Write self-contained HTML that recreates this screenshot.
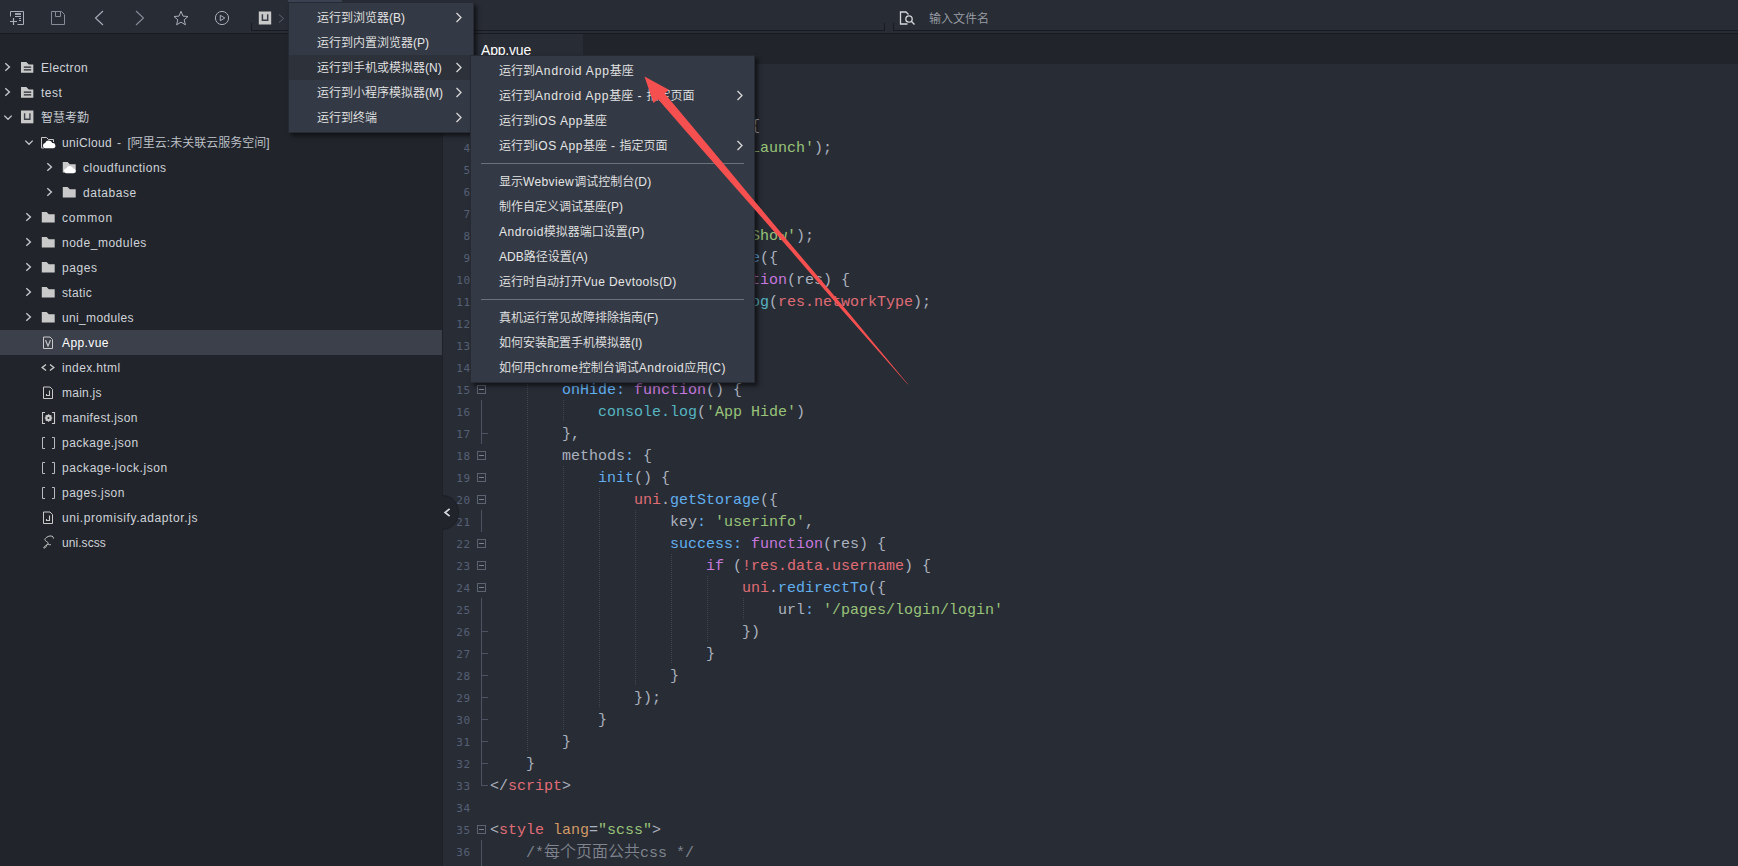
<!DOCTYPE html><html lang="zh-CN"><head><meta charset="utf-8"><title>HBuilder X</title><style>
*{box-sizing:border-box;margin:0;padding:0}
html,body{width:1738px;height:866px;overflow:hidden;background:#282c35;}
body{position:relative;font-family:"Liberation Sans", "Noto Sans CJK SC", sans-serif;font-size:12px;color:#d0d3d9;font-weight:350;}
#toolbar{position:absolute;left:0;top:0;width:1738px;height:33px;background:#282c35;}
#tbline{position:absolute;left:0;top:33px;width:1738px;height:1px;background:#181a1f;}
#topstrip{position:absolute;left:288px;top:0;width:54px;height:2px;background:#3e4353;}
.ibox{position:absolute;height:8px;border:1px solid #181a1f;border-top:none;}
#sidebar{position:absolute;left:0;top:34px;width:442px;height:832px;background:#21252b;}
#split{position:absolute;left:442px;top:34px;width:1px;height:832px;background:#1e2127;}
.row{position:absolute;left:0;width:442px;height:25px;line-height:25px;white-space:nowrap;color:#d0d3d9;}
.row.sel{background:#3c404b;color:#fff;}
.row svg{position:absolute;top:0;}
.row .t{position:absolute;top:1px;}
.dim{color:#c0c4cc;}
#tabbar{position:absolute;left:443px;top:34px;width:1295px;height:30px;background:#21252b;}
#tab{position:absolute;left:473px;top:34px;width:110px;height:30px;background:#282c35;color:#fff;font-size:14px;letter-spacing:-0.2px;}
#tab span{position:absolute;left:8px;top:8px;line-height:16px;}
#editor{position:absolute;left:444px;top:72px;width:1294px;height:795px;overflow:hidden;}
.ln{position:absolute;left:0;width:1294px;height:22px;line-height:22px;white-space:pre;font-family:"Liberation Mono", "Noto Sans CJK SC", monospace;font-size:15px;color:#abb2bf;}
.ln .no{position:absolute;left:0;top:0;width:26.6px;letter-spacing:0.5px;text-align:right;font-family:"DejaVu Sans Mono","Liberation Mono",monospace;font-size:11px;color:#566075;line-height:22px;}
.ln .c{position:absolute;left:46px;top:0;}
.fb{position:absolute;left:33px;top:5px;width:9px;height:9px;border:1px solid #5c6370;}
.fb:after{content:"";position:absolute;left:1px;top:3px;width:5px;height:1px;background:#7a8190;}
.fv{position:absolute;left:37px;top:-2px;width:1px;height:22px;background:#4b5263;}
.ft{position:absolute;left:37px;top:9px;width:7px;height:1px;background:#4b5263;}
.fe{position:absolute;left:37px;top:-2px;width:1px;height:12px;background:#4b5263;}
.ig{position:absolute;top:-2px;width:1px;height:22px;background-image:linear-gradient(#3e4451 50%, transparent 50%);background-size:1px 2px;}
.k{color:#c678dd}.b{color:#61afef}.g{color:#98c379}.r{color:#e06c75}.cy{color:#56b6c2}.o{color:#d19a66}.cm{color:#7f848e}
.menu{position:absolute;background:#343a45;border:1px solid #262a33;box-shadow:3px 3px 4px rgba(0,0,0,.55);color:#e6e6e6;font-size:12px;}
.mi{position:absolute;left:0;height:25px;line-height:25px;white-space:nowrap;}
.mi.hl{background:#2c313a;}
.mi>span{position:absolute;top:1px;}
.mi svg{position:absolute;top:7px;}
.sep{position:absolute;height:1px;background:#6b707a;}
#handle{position:absolute;left:425px;top:495px;width:34px;height:35px;border-radius:50%;background:#21252b;border:1px solid #1c1f25;clip-path:inset(0 0 0 17px);}
</style></head><body>
<div id="toolbar">
<svg style="position:absolute;left:9px;top:10px" width="16" height="16" viewBox="0 0 16 16" fill="none" stroke="#aaafba" stroke-width="1"><path d="M1.5 6.5V1.5H14.5V14.5H8.5"/><rect x="6" y="3.1" width="6" height="1.8" fill="#aaafba" stroke="none"/><path d="M6 6.5H12M10 8.5H12M10 10.5H12"/><path d="M1 11.5H8M4.5 8V15" stroke-width="1.2"/></svg>
<svg style="position:absolute;left:50px;top:10px" width="16" height="16" viewBox="0 0 16 16" fill="none" stroke="#878c98" stroke-width="1"><path d="M1.5 1.5H11.5L14.5 4.5V14.5H1.5Z"/><path d="M5.5 1.5V6.5H10.5V1.5"/></svg>
<svg style="position:absolute;left:93px;top:10px" width="12" height="16" viewBox="0 0 12 16" fill="none" stroke="#aaafba" stroke-width="1.1"><path d="M10 1L2.5 8L10 15"/></svg>
<svg style="position:absolute;left:134px;top:10px" width="12" height="16" viewBox="0 0 12 16" fill="none" stroke="#878c98" stroke-width="1.1"><path d="M2 1L9.5 8L2 15"/></svg>
<svg style="position:absolute;left:173px;top:10px" width="16" height="16" viewBox="0 0 16 16" fill="none" stroke="#aaafba" stroke-width="1" stroke-linejoin="miter"><path d="M8 1.3L10 6.1L15 6.5L11.2 9.8L12.4 14.8L8 12.1L3.6 14.8L4.8 9.8L1 6.5L6 6.1Z"/></svg>
<svg style="position:absolute;left:214px;top:10px" width="16" height="16" viewBox="0 0 16 16" fill="none" stroke="#aaafba" stroke-width="1"><circle cx="8" cy="8" r="6.6"/><path d="M6.3 5.3L10.8 8L6.3 10.7Z"/></svg>
<svg style="position:absolute;left:258px;top:11px" width="14" height="14" viewBox="0 0 14 14"><rect x="0.8" y="0.5" width="12.4" height="13" fill="#c9c9c9"/><path d="M4.4 3.3V9.3H9.7V3.3" fill="none" stroke="#3a3e47" stroke-width="1.5"/></svg>
<svg style="position:absolute;left:278px;top:14px" width="7" height="10" viewBox="0 0 7 10" fill="none" stroke="#5f6572" stroke-width="1"><path d="M1 0.5L5.5 4.5L1 8.5"/></svg>
<div class="ibox" style="left:251px;top:23px;width:634px"></div>
<div class="ibox" style="left:893px;top:23px;width:860px"></div>
<svg style="position:absolute;left:899px;top:11px" width="17" height="15" viewBox="0 0 17 15" fill="none" stroke="#d4d6da" stroke-width="1.3"><path d="M8.5 13H1.5V1H7L9.5 3.5"/><circle cx="10" cy="8" r="3.2"/><path d="M12.3 10.3L15.5 13.5"/></svg>
<span style="position:absolute;left:929px;top:11px;line-height:17px;font-size:12px;color:#9da1a8">输入文件名</span>
</div><div id="tbline"></div><div id="topstrip"></div>
<div id="sidebar">
<div class="row" style="top:21px"><svg style="left:4px" width="8" height="25" viewBox="0 0 8 25" fill="none" stroke="#c5c8ce" stroke-width="1.4"><path d="M1.3 8.3L5.4 12L1.3 15.7"/></svg><svg style="left:20px" width="15" height="25" viewBox="0 0 15 25"><path d="M1 7H6.3L8.8 9.5H13.3V17.8H1Z" fill="#c9c9c9"/><path d="M3.8 12.2H11.2M3.8 14.8H11.2" stroke="#21252b" stroke-width="1.3"/></svg><span class="t" style="left:41px"><span id="f1"><span style="letter-spacing:0.37px">Electron</span></span></span></div>
<div class="row" style="top:46px"><svg style="left:4px" width="8" height="25" viewBox="0 0 8 25" fill="none" stroke="#c5c8ce" stroke-width="1.4"><path d="M1.3 8.3L5.4 12L1.3 15.7"/></svg><svg style="left:20px" width="15" height="25" viewBox="0 0 15 25"><path d="M1 7H6.3L8.8 9.5H13.3V17.8H1Z" fill="#c9c9c9"/><path d="M3.8 12.2H11.2M3.8 14.8H11.2" stroke="#21252b" stroke-width="1.3"/></svg><span class="t" style="left:41px"><span id="f2"><span style="letter-spacing:0.51px">test</span></span></span></div>
<div class="row" style="top:71px"><svg style="left:2px" width="12" height="25" viewBox="0 0 12 25" fill="none" stroke="#c5c8ce" stroke-width="1.3"><path d="M2.3 10.6L6 14.3L9.7 10.6"/></svg><svg style="left:20px" width="15" height="25" viewBox="0 0 15 25"><rect x="1" y="5.5" width="12.4" height="12.8" fill="#c9c9c9"/><path d="M4.6 8.2V14.3H9.9V8.2" fill="none" stroke="#3c4049" stroke-width="1.4"/></svg><span class="t" style="left:41px"><span id="f3">智慧考勤</span></span></div>
<div class="row" style="top:96px"><svg style="left:23px" width="12" height="25" viewBox="0 0 12 25" fill="none" stroke="#c5c8ce" stroke-width="1.3"><path d="M2.3 10.6L6 14.3L9.7 10.6"/></svg><svg style="left:41px" width="15" height="25" viewBox="0 0 15 25"><path d="M0.5 18V7.5H5.5L7.5 9.5H12.5V12" fill="none" stroke="#c9c9c9" stroke-width="1"/><path d="M3.8 18.3a2.8 2.8 0 0 1 .3-5.4a3.8 3.8 0 0 1 7.2 .2a2.6 2.6 0 0 1 .9 5.2Z" fill="#fff"/><path d="M0.5 18H3" stroke="#c9c9c9"/></svg><span class="t" style="left:62px"><span id="f4"><span style="letter-spacing:0.33px">uniCloud</span></span><span class="dim"><span id="f5"><span style="letter-spacing:1.61px"> - </span>[阿里云:未关联云服务空间]</span></span></span></div>
<div class="row" style="top:121px"><svg style="left:46px" width="8" height="25" viewBox="0 0 8 25" fill="none" stroke="#c5c8ce" stroke-width="1.4"><path d="M1.3 8.3L5.4 12L1.3 15.7"/></svg><svg style="left:62px" width="15" height="25" viewBox="0 0 15 25"><path d="M0.8 7H5.6L7.8 9.3H13.7V17.6H0.8Z" fill="#c9c9c9"/><path d="M4 18.3a2.6 2.6 0 0 1 .4-5.1a3.6 3.6 0 0 1 6.8 .2a2.5 2.5 0 0 1 .6 4.9Z" fill="#fff"/></svg><span class="t" style="left:83px"><span id="f6"><span style="letter-spacing:0.49px">cloudfunctions</span></span></span></div>
<div class="row" style="top:146px"><svg style="left:46px" width="8" height="25" viewBox="0 0 8 25" fill="none" stroke="#c5c8ce" stroke-width="1.4"><path d="M1.3 8.3L5.4 12L1.3 15.7"/></svg><svg style="left:62px" width="15" height="25" viewBox="0 0 15 25"><path d="M0.8 7H5.6L7.8 9.3H13.7V17.6H0.8Z" fill="#c9c9c9"/></svg><span class="t" style="left:83px"><span id="f7"><span style="letter-spacing:0.54px">database</span></span></span></div>
<div class="row" style="top:171px"><svg style="left:25px" width="8" height="25" viewBox="0 0 8 25" fill="none" stroke="#c5c8ce" stroke-width="1.4"><path d="M1.3 8.3L5.4 12L1.3 15.7"/></svg><svg style="left:41px" width="15" height="25" viewBox="0 0 15 25"><path d="M0.8 7H5.6L7.8 9.3H13.7V17.6H0.8Z" fill="#c9c9c9"/></svg><span class="t" style="left:62px"><span id="f8"><span style="letter-spacing:0.83px">common</span></span></span></div>
<div class="row" style="top:196px"><svg style="left:25px" width="8" height="25" viewBox="0 0 8 25" fill="none" stroke="#c5c8ce" stroke-width="1.4"><path d="M1.3 8.3L5.4 12L1.3 15.7"/></svg><svg style="left:41px" width="15" height="25" viewBox="0 0 15 25"><path d="M0.8 7H5.6L7.8 9.3H13.7V17.6H0.8Z" fill="#c9c9c9"/></svg><span class="t" style="left:62px"><span id="f9"><span style="letter-spacing:0.51px">node_modules</span></span></span></div>
<div class="row" style="top:221px"><svg style="left:25px" width="8" height="25" viewBox="0 0 8 25" fill="none" stroke="#c5c8ce" stroke-width="1.4"><path d="M1.3 8.3L5.4 12L1.3 15.7"/></svg><svg style="left:41px" width="15" height="25" viewBox="0 0 15 25"><path d="M0.8 7H5.6L7.8 9.3H13.7V17.6H0.8Z" fill="#c9c9c9"/></svg><span class="t" style="left:62px"><span id="f10"><span style="letter-spacing:0.60px">pages</span></span></span></div>
<div class="row" style="top:246px"><svg style="left:25px" width="8" height="25" viewBox="0 0 8 25" fill="none" stroke="#c5c8ce" stroke-width="1.4"><path d="M1.3 8.3L5.4 12L1.3 15.7"/></svg><svg style="left:41px" width="15" height="25" viewBox="0 0 15 25"><path d="M0.8 7H5.6L7.8 9.3H13.7V17.6H0.8Z" fill="#c9c9c9"/></svg><span class="t" style="left:62px"><span id="f11"><span style="letter-spacing:0.36px">static</span></span></span></div>
<div class="row" style="top:271px"><svg style="left:25px" width="8" height="25" viewBox="0 0 8 25" fill="none" stroke="#c5c8ce" stroke-width="1.4"><path d="M1.3 8.3L5.4 12L1.3 15.7"/></svg><svg style="left:41px" width="15" height="25" viewBox="0 0 15 25"><path d="M0.8 7H5.6L7.8 9.3H13.7V17.6H0.8Z" fill="#c9c9c9"/></svg><span class="t" style="left:62px"><span id="f12"><span style="letter-spacing:0.35px">uni_modules</span></span></span></div>
<div class="row sel" style="top:296px"><svg style="left:41px" width="15" height="25" viewBox="0 0 15 25"><path d="M2.5 7H9L11.5 9.5V18.5H2.5Z" fill="none" stroke="#c9c9c9" stroke-width="1"/><path d="M4.5 10L7 16L9.5 10" fill="none" stroke="#c9c9c9" stroke-width="1.1"/></svg><span class="t" style="left:62px"><span id="f13"><span style="letter-spacing:0.39px">App.vue</span></span></span></div>
<div class="row" style="top:321px"><svg style="left:41px" width="15" height="25" viewBox="0 0 15 25"><path d="M5 9.5L1.2 12.5L5 15.5M9 9.5L12.8 12.5L9 15.5" fill="none" stroke="#c9c9c9" stroke-width="1.4"/></svg><span class="t" style="left:62px"><span id="f14"><span style="letter-spacing:0.38px">index.html</span></span></span></div>
<div class="row" style="top:346px"><svg style="left:41px" width="15" height="25" viewBox="0 0 15 25"><path d="M2.5 7H9L11.5 9.5V18.5H2.5Z" fill="none" stroke="#c9c9c9" stroke-width="1"/><path d="M8.5 10.5V15.5H5.5V14" fill="none" stroke="#c9c9c9" stroke-width="1.1"/></svg><span class="t" style="left:62px"><span id="f15"><span style="letter-spacing:0.25px">main.js</span></span></span></div>
<div class="row" style="top:371px"><svg style="left:41px" width="15" height="25" viewBox="0 0 15 25"><path d="M4 7.5H1.5V18.5H4M11 7.5H13.5V18.5H11" fill="none" stroke="#c9c9c9" stroke-width="1.1"/><circle cx="7.5" cy="13" r="2.2" fill="none" stroke="#c9c9c9" stroke-width="2"/><path d="M7.5 9.2V16.8M3.7 13H11.3M4.8 10.3L10.2 15.7M10.2 10.3L4.8 15.7" stroke="#c9c9c9" stroke-width="1.2"/><circle cx="7.5" cy="13" r="1" fill="#21252b"/></svg><span class="t" style="left:62px"><span id="f16"><span style="letter-spacing:0.40px">manifest.json</span></span></span></div>
<div class="row" style="top:396px"><svg style="left:41px" width="15" height="25" viewBox="0 0 15 25"><path d="M4 7.5H1.5V18.5H4M11 7.5H13.5V18.5H11" fill="none" stroke="#b9bbc0" stroke-width="1"/></svg><span class="t" style="left:62px"><span id="f17"><span style="letter-spacing:0.49px">package.json</span></span></span></div>
<div class="row" style="top:421px"><svg style="left:41px" width="15" height="25" viewBox="0 0 15 25"><path d="M4 7.5H1.5V18.5H4M11 7.5H13.5V18.5H11" fill="none" stroke="#b9bbc0" stroke-width="1"/></svg><span class="t" style="left:62px"><span id="f18"><span style="letter-spacing:0.57px">package-lock.json</span></span></span></div>
<div class="row" style="top:446px"><svg style="left:41px" width="15" height="25" viewBox="0 0 15 25"><path d="M4 7.5H1.5V18.5H4M11 7.5H13.5V18.5H11" fill="none" stroke="#b9bbc0" stroke-width="1"/></svg><span class="t" style="left:62px"><span id="f19"><span style="letter-spacing:0.49px">pages.json</span></span></span></div>
<div class="row" style="top:471px"><svg style="left:41px" width="15" height="25" viewBox="0 0 15 25"><path d="M2.5 7H9L11.5 9.5V18.5H2.5Z" fill="none" stroke="#c9c9c9" stroke-width="1"/><path d="M8.5 10.5V15.5H5.5V14" fill="none" stroke="#c9c9c9" stroke-width="1.1"/></svg><span class="t" style="left:62px"><span id="f20"><span style="letter-spacing:0.59px">uni.promisify.adaptor.js</span></span></span></div>
<div class="row" style="top:496px"><svg style="left:41px" width="15" height="25" viewBox="0 0 15 25"><path d="M12.3 8.6C13 5.6 8.5 5 5.2 7.6C2 10.2 5.6 11.3 6.8 12.4C8.3 13.8 5.2 15.2 3.6 16.4C1.8 17.8 3 18.6 4.3 17.6C5.8 16.4 5.4 14.4 6.6 14.3C7.8 14.2 8.3 15.2 9.8 14.6" fill="none" stroke="#c9c9c9" stroke-width="1"/></svg><span class="t" style="left:62px"><span id="f21"><span style="letter-spacing:0.06px">uni.scss</span></span></span></div>
</div><div id="split"></div>
<div id="tabbar"></div><div id="tab"><span>App.vue</span></div>
<div id="editor">
<div class="ln" style="top:0px"><span class="no">1</span><i class="fb"></i><span class="c">&lt;<span class="r">script</span>&gt;</span></div>
<div class="ln" style="top:22px"><span class="no">2</span><i class="fb"></i><span class="c">    <span class="k">export</span> <span class="k">default</span> {</span></div>
<div class="ln" style="top:44px"><span class="no">3</span><i class="fb"></i><i class="ig" style="left:83px"></i><span class="c">        <span class="b">onLaunch:</span> <span class="k">function</span>() {</span></div>
<div class="ln" style="top:66px"><span class="no">4</span><i class="fv"></i><i class="ig" style="left:83px"></i><i class="ig" style="left:119px"></i><span class="c">            <span class="cy">console.log</span>(<span class="g">&#x27;App Launch&#x27;</span>);</span></div>
<div class="ln" style="top:88px"><span class="no">5</span><i class="fv"></i><i class="ig" style="left:83px"></i><i class="ig" style="left:119px"></i><span class="c">            <span class="r">this</span>.<span class="b">init</span>();</span></div>
<div class="ln" style="top:110px"><span class="no">6</span><i class="fv"></i><i class="ft"></i><i class="ig" style="left:83px"></i><span class="c">        },</span></div>
<div class="ln" style="top:132px"><span class="no">7</span><i class="fb"></i><i class="ig" style="left:83px"></i><span class="c">        <span class="b">onShow:</span> <span class="k">function</span>() {</span></div>
<div class="ln" style="top:154px"><span class="no">8</span><i class="fv"></i><i class="ig" style="left:83px"></i><i class="ig" style="left:119px"></i><span class="c">            <span class="cy">console.log</span>(<span class="g">&#x27;App Show&#x27;</span>);</span></div>
<div class="ln" style="top:176px"><span class="no">9</span><i class="fb"></i><i class="ig" style="left:83px"></i><i class="ig" style="left:119px"></i><span class="c">            <span class="r">uni</span>.<span class="b">getNetworkType</span>({</span></div>
<div class="ln" style="top:198px"><span class="no">10</span><i class="fb"></i><i class="ig" style="left:83px"></i><i class="ig" style="left:119px"></i><i class="ig" style="left:155px"></i><span class="c">                <span class="b">success:</span> <span class="k">function</span>(res) {</span></div>
<div class="ln" style="top:220px"><span class="no">11</span><i class="fv"></i><i class="ig" style="left:83px"></i><i class="ig" style="left:119px"></i><i class="ig" style="left:155px"></i><i class="ig" style="left:191px"></i><span class="c">                    <span class="cy">console.log</span>(<span class="r">res.networkType</span>);</span></div>
<div class="ln" style="top:242px"><span class="no">12</span><i class="fv"></i><i class="ft"></i><i class="ig" style="left:83px"></i><i class="ig" style="left:119px"></i><i class="ig" style="left:155px"></i><span class="c">                }</span></div>
<div class="ln" style="top:264px"><span class="no">13</span><i class="fv"></i><i class="ft"></i><i class="ig" style="left:83px"></i><i class="ig" style="left:119px"></i><span class="c">            });</span></div>
<div class="ln" style="top:286px"><span class="no">14</span><i class="fv"></i><i class="ft"></i><i class="ig" style="left:83px"></i><span class="c">        },</span></div>
<div class="ln" style="top:308px"><span class="no">15</span><i class="fb"></i><i class="ig" style="left:83px"></i><span class="c">        <span class="b">onHide:</span> <span class="k">function</span>() {</span></div>
<div class="ln" style="top:330px"><span class="no">16</span><i class="fv"></i><i class="ig" style="left:83px"></i><i class="ig" style="left:119px"></i><span class="c">            <span class="cy">console.log</span>(<span class="g">&#x27;App Hide&#x27;</span>)</span></div>
<div class="ln" style="top:352px"><span class="no">17</span><i class="fv"></i><i class="ft"></i><i class="ig" style="left:83px"></i><span class="c">        },</span></div>
<div class="ln" style="top:374px"><span class="no">18</span><i class="fb"></i><i class="ig" style="left:83px"></i><span class="c">        methods<span class="b">:</span> {</span></div>
<div class="ln" style="top:396px"><span class="no">19</span><i class="fb"></i><i class="ig" style="left:83px"></i><i class="ig" style="left:119px"></i><span class="c">            <span class="b">init</span>() {</span></div>
<div class="ln" style="top:418px"><span class="no">20</span><i class="fb"></i><i class="ig" style="left:83px"></i><i class="ig" style="left:119px"></i><i class="ig" style="left:155px"></i><span class="c">                <span class="r">uni</span>.<span class="b">getStorage</span>({</span></div>
<div class="ln" style="top:440px"><span class="no">21</span><i class="fv"></i><i class="ig" style="left:83px"></i><i class="ig" style="left:119px"></i><i class="ig" style="left:155px"></i><i class="ig" style="left:191px"></i><span class="c">                    key<span class="b">:</span> <span class="g">&#x27;userinfo&#x27;</span>,</span></div>
<div class="ln" style="top:462px"><span class="no">22</span><i class="fb"></i><i class="ig" style="left:83px"></i><i class="ig" style="left:119px"></i><i class="ig" style="left:155px"></i><i class="ig" style="left:191px"></i><span class="c">                    <span class="b">success:</span> <span class="k">function</span>(res) {</span></div>
<div class="ln" style="top:484px"><span class="no">23</span><i class="fb"></i><i class="ig" style="left:83px"></i><i class="ig" style="left:119px"></i><i class="ig" style="left:155px"></i><i class="ig" style="left:191px"></i><i class="ig" style="left:227px"></i><span class="c">                        <span class="k">if</span> (<span class="r">!res.data.username</span>) {</span></div>
<div class="ln" style="top:506px"><span class="no">24</span><i class="fb"></i><i class="ig" style="left:83px"></i><i class="ig" style="left:119px"></i><i class="ig" style="left:155px"></i><i class="ig" style="left:191px"></i><i class="ig" style="left:227px"></i><i class="ig" style="left:263px"></i><span class="c">                            <span class="r">uni</span>.<span class="b">redirectTo</span>({</span></div>
<div class="ln" style="top:528px"><span class="no">25</span><i class="fv"></i><i class="ig" style="left:83px"></i><i class="ig" style="left:119px"></i><i class="ig" style="left:155px"></i><i class="ig" style="left:191px"></i><i class="ig" style="left:227px"></i><i class="ig" style="left:263px"></i><i class="ig" style="left:299px"></i><span class="c">                                url<span class="b">:</span> <span class="g">&#x27;/pages/login/login&#x27;</span></span></div>
<div class="ln" style="top:550px"><span class="no">26</span><i class="fv"></i><i class="ft"></i><i class="ig" style="left:83px"></i><i class="ig" style="left:119px"></i><i class="ig" style="left:155px"></i><i class="ig" style="left:191px"></i><i class="ig" style="left:227px"></i><i class="ig" style="left:263px"></i><span class="c">                            })</span></div>
<div class="ln" style="top:572px"><span class="no">27</span><i class="fv"></i><i class="ft"></i><i class="ig" style="left:83px"></i><i class="ig" style="left:119px"></i><i class="ig" style="left:155px"></i><i class="ig" style="left:191px"></i><i class="ig" style="left:227px"></i><span class="c">                        }</span></div>
<div class="ln" style="top:594px"><span class="no">28</span><i class="fv"></i><i class="ft"></i><i class="ig" style="left:83px"></i><i class="ig" style="left:119px"></i><i class="ig" style="left:155px"></i><i class="ig" style="left:191px"></i><span class="c">                    }</span></div>
<div class="ln" style="top:616px"><span class="no">29</span><i class="fv"></i><i class="ft"></i><i class="ig" style="left:83px"></i><i class="ig" style="left:119px"></i><i class="ig" style="left:155px"></i><span class="c">                });</span></div>
<div class="ln" style="top:638px"><span class="no">30</span><i class="fv"></i><i class="ft"></i><i class="ig" style="left:83px"></i><i class="ig" style="left:119px"></i><span class="c">            }</span></div>
<div class="ln" style="top:660px"><span class="no">31</span><i class="fv"></i><i class="ft"></i><i class="ig" style="left:83px"></i><span class="c">        }</span></div>
<div class="ln" style="top:682px"><span class="no">32</span><i class="fv"></i><i class="ft"></i><span class="c">    }</span></div>
<div class="ln" style="top:704px"><span class="no">33</span><i class="fe"></i><i class="ft"></i><span class="c">&lt;/<span class="r">script</span>&gt;</span></div>
<div class="ln" style="top:726px"><span class="no">34</span><span class="c"></span></div>
<div class="ln" style="top:748px"><span class="no">35</span><i class="fb"></i><span class="c">&lt;<span class="r">style</span> <span class="o">lang</span>=<span class="g">&quot;scss&quot;</span>&gt;</span></div>
<div class="ln" style="top:770px"><span class="no">36</span><i class="fv"></i><span class="c">    <span class="cm">/*<span style="font-size:16px">每个页面公共</span>css */</span></span></div>
<div class="ln" style="top:792px"><span class="no">37</span><i class="fv"></i><span class="c">    </span></div>
</div>
<div id="handle"></div>
<svg style="position:absolute;left:442px;top:506px" width="10" height="12" viewBox="0 0 10 12" fill="none" stroke="#d7dae0" stroke-width="1.7"><path d="M7.6 2.9L3.1 6.5L7.6 10.1"/></svg>
<div class="menu" style="left:288px;top:2px;width:186px;height:131px">
<div class="mi" style="top:2px;width:184px"><span style="left:28px"><span id="f22">运行到浏览器(B)</span></span><svg style="left:166px" width="8" height="11" viewBox="0 0 8 11" fill="none" stroke="#d8d8d8" stroke-width="1.3"><path d="M1.5 1L6 5.5L1.5 10"/></svg></div>
<div class="mi" style="top:27px;width:184px"><span style="left:28px"><span id="f23">运行到内置浏览器(P)</span></span></div>
<div class="mi hl" style="top:52px;width:184px"><span style="left:28px"><span id="f24">运行到手机或模拟器(N)</span></span><svg style="left:166px" width="8" height="11" viewBox="0 0 8 11" fill="none" stroke="#d8d8d8" stroke-width="1.3"><path d="M1.5 1L6 5.5L1.5 10"/></svg></div>
<div class="mi" style="top:77px;width:184px"><span style="left:28px"><span id="f25">运行到小程序模拟器(M)</span></span><svg style="left:166px" width="8" height="11" viewBox="0 0 8 11" fill="none" stroke="#d8d8d8" stroke-width="1.3"><path d="M1.5 1L6 5.5L1.5 10"/></svg></div>
<div class="mi" style="top:102px;width:184px"><span style="left:28px"><span id="f26">运行到终端</span></span><svg style="left:166px" width="8" height="11" viewBox="0 0 8 11" fill="none" stroke="#d8d8d8" stroke-width="1.3"><path d="M1.5 1L6 5.5L1.5 10"/></svg></div>
</div>
<div class="menu" style="left:470px;top:55px;width:285px;height:328px">
<div class="mi" style="top:2px;width:284px"><span style="left:28px"><span id="f27">运行到<span style="letter-spacing:0.85px">Android App</span>基座</span></span></div>
<div class="mi" style="top:27px;width:284px"><span style="left:28px"><span id="f28">运行到<span style="letter-spacing:0.81px">Android App</span>基座<span style="letter-spacing:0.81px"> - </span>指定页面</span></span><svg style="left:265px" width="8" height="11" viewBox="0 0 8 11" fill="none" stroke="#d8d8d8" stroke-width="1.3"><path d="M1.5 1L6 5.5L1.5 10"/></svg></div>
<div class="mi" style="top:52px;width:284px"><span style="left:28px"><span id="f29">运行到<span style="letter-spacing:0.55px">iOS App</span>基座</span></span></div>
<div class="mi" style="top:77px;width:284px"><span style="left:28px"><span id="f30">运行到<span style="letter-spacing:0.57px">iOS App</span>基座<span style="letter-spacing:0.57px"> - </span>指定页面</span></span><svg style="left:265px" width="8" height="11" viewBox="0 0 8 11" fill="none" stroke="#d8d8d8" stroke-width="1.3"><path d="M1.5 1L6 5.5L1.5 10"/></svg></div>
<div class="sep" style="left:10px;top:107px;width:263px"></div>
<div class="mi" style="top:113px;width:284px"><span style="left:28px"><span id="f31">显示<span style="letter-spacing:0.38px">Webview</span>调试控制台(<span style="letter-spacing:0.38px">D</span>)</span></span></div>
<div class="mi" style="top:138px;width:284px"><span style="left:28px"><span id="f32">制作自定义调试基座(P)</span></span></div>
<div class="mi" style="top:163px;width:284px"><span style="left:28px"><span id="f33"><span style="letter-spacing:0.49px">Android</span>模拟器端口设置(<span style="letter-spacing:0.49px">P</span>)</span></span></div>
<div class="mi" style="top:188px;width:284px"><span style="left:28px"><span id="f34">ADB路径设置(A)</span></span></div>
<div class="mi" style="top:213px;width:284px"><span style="left:28px"><span id="f35">运行时自动打开<span style="letter-spacing:0.44px">Vue Devtools</span>(<span style="letter-spacing:0.44px">D</span>)</span></span></div>
<div class="sep" style="left:10px;top:243px;width:263px"></div>
<div class="mi" style="top:249px;width:284px"><span style="left:28px"><span id="f36">真机运行常见故障排除指南(F)</span></span></div>
<div class="mi" style="top:274px;width:284px"><span style="left:28px"><span id="f37">如何安装配置手机模拟器(I)</span></span></div>
<div class="mi" style="top:299px;width:284px"><span style="left:28px"><span id="f38">如何用<span style="letter-spacing:0.60px">chrome</span>控制台调试<span style="letter-spacing:0.60px">Android</span>应用(<span style="letter-spacing:0.60px">C</span>)</span></span></div>
</div>
<svg style="position:absolute;left:0;top:0;pointer-events:none" width="1738" height="866" viewBox="0 0 1738 866"><polygon points="644.5,76.6 668.8,89.8 664.7,93.6 693.0,127.2 721.2,161.0 751.9,197.9 794.2,248.5 820.1,279.0 845.3,308.8 908.0,384.3 907.8,384.5 842.9,310.9 817.4,281.4 791.2,251.1 747.7,201.5 716.0,165.4 687.0,132.4 658.1,99.2 653.5,103.0" fill="#f5504f"/></svg>
</body></html>
